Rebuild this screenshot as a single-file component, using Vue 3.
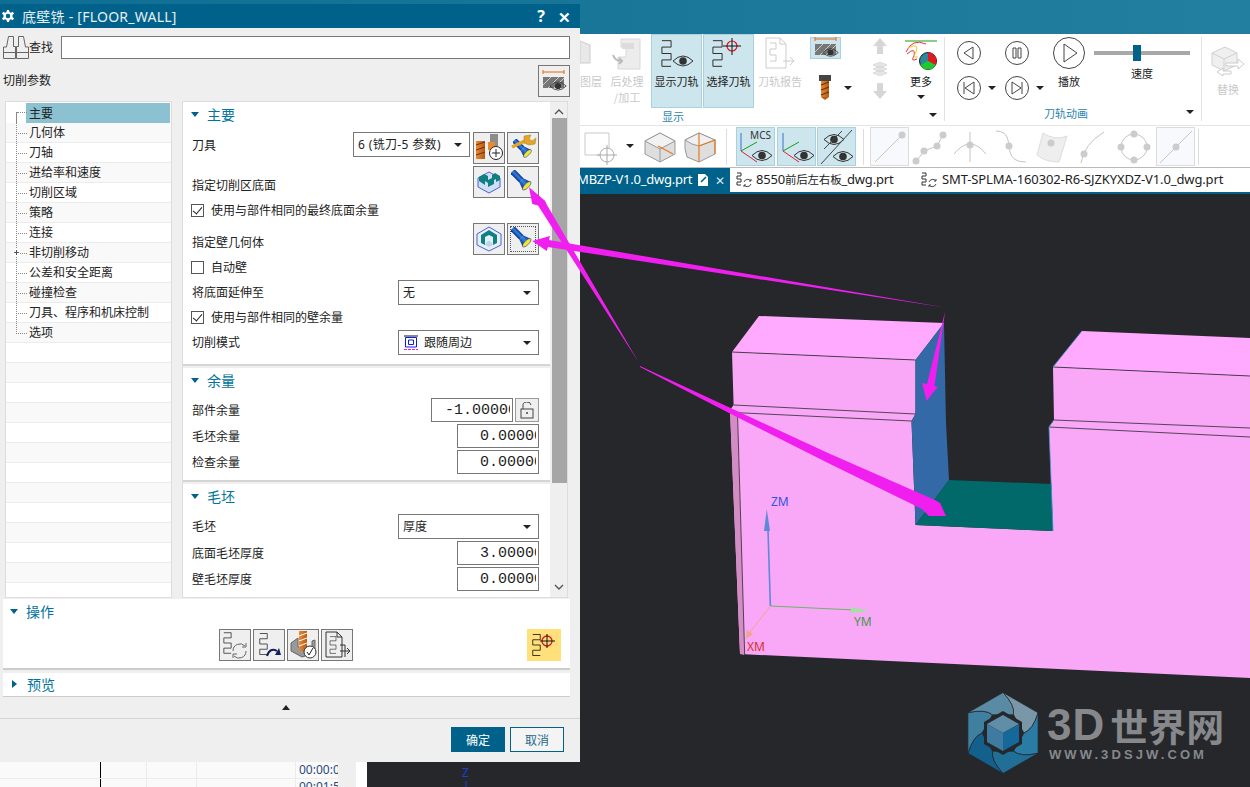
<script setup>
const treeItems = ['主要', '几何体', '刀轴', '进给率和速度', '切削区域', '策略', '连接', '非切削移动', '公差和安全距离', '碰撞检查', '刀具、程序和机床控制', '选项']
const emptyRows = 13
const tableRows = [['00:00:0'], ['00:01:5']]

// pinwheel blades of the watermark logo
const pt = (deg, rad) => {
  const a = (deg * Math.PI) / 180
  return `${(36 + rad * Math.cos(a)).toFixed(1)} ${(41 + rad * Math.sin(a)).toFixed(1)}`
}
const bladeColors = ['#7a97a8', '#2a7ca4', '#1f6f97', '#14608c', '#3f7fa0', '#5a8ba4']
const blades = bladeColors.map((fill, i) => {
  const a = -90 + 60 * i
  const b = a + 60
  const d = `M${pt(a, 40.5)} L${pt(b, 40.5)} Q${pt(b + 24, 30)} ${pt(b + 30, 21)} L${pt(a + 30, 21)} Q${pt(a + 24, 30)} ${pt(a, 40.5)} Z`
  return { fill, d }
})
</script>

<template>
  <div class="page">
    <svg class="defs" width="0" height="0">
      <defs>
        <linearGradient id="torch" x1="0" y1="0" x2="1" y2="0">
          <stop offset="0" stop-color="#0a2c8c" />
          <stop offset="0.55" stop-color="#2f86de" />
          <stop offset="1" stop-color="#0a2c8c" />
        </linearGradient>
        <linearGradient id="orange" x1="0" y1="0" x2="1" y2="0">
          <stop offset="0" stop-color="#e98a30" />
          <stop offset="1" stop-color="#b85a14" />
        </linearGradient>
        <symbol id="flashlight" viewBox="0 0 24 24">
          <g transform="rotate(-45 12 12)">
            <rect x="9" y="-3" width="6" height="13" fill="url(#torch)" />
            <path d="M9 10 L15 10 L17.5 17 L6.5 17 Z" fill="url(#torch)" />
            <ellipse cx="12" cy="17.3" rx="5.6" ry="2.2" fill="#f4e42a" stroke="#1b3fa8" stroke-width="0.6" />
          </g>
        </symbol>
        <symbol id="comb" viewBox="0 0 12 30">
          <path d="M1 1 H11 V8 H1 V15 H11 V22 H1 V29 H11" fill="none" stroke="currentColor" stroke-width="1" />
        </symbol>
        <symbol id="eye" viewBox="0 0 22 14">
          <path d="M1 7 Q11 -3 21 7 Q11 17 1 7 Z" fill="none" stroke="#333" stroke-width="1" />
          <circle cx="11" cy="7" r="3.8" fill="#333" />
        </symbol>
      </defs>
    </svg>

    <div class="titlebar-strip"></div>

    <!-- ribbon -->
    <div class="ribbon">
      <div class="group show-group">
        <div class="group-body">
          <div class="rb-btn faded w-layer">
            <svg width="22" height="33" viewBox="0 0 22 33"><path d="M0 4 L10 8 L10 26 L0 26 Z" fill="#e8e8e8" stroke="#ccc" /></svg>
            <span>图层</span>
          </div>
          <div class="rb-btn faded w-post">
            <svg width="30" height="33" viewBox="0 0 30 33">
              <path d="M9 2 H28 V32 H6 V20 H14 V10 H9 Z" fill="#ececec" stroke="#d8d8d8" />
              <path d="M10 6 H22 V12 H10 Z" fill="#dcdcdc" />
              <path d="M1 18 Q3 24 9 24 M7 21 L10 24 L7 27" fill="none" stroke="#bbb" stroke-width="2" />
            </svg>
            <span>后处理</span>
            <span>/加工</span>
          </div>
          <div class="rb-btn active w-big">
            <svg width="34" height="33" viewBox="0 0 34 33">
              <use href="#comb" x="1" y="1" width="11" height="31" class="ink" />
              <use href="#eye" x="12" y="17" width="22" height="14" />
            </svg>
            <span>显示刀轨</span>
          </div>
          <div class="rb-btn active w-big">
            <svg width="36" height="33" viewBox="0 0 36 33">
              <use href="#comb" x="1" y="1" width="11" height="31" class="ink" />
              <circle cx="21" cy="9" r="5" fill="none" stroke="#e0141c" stroke-width="1.2" />
              <path d="M12 9 H30 M21 1 V18" stroke="#111" stroke-width="1" />
            </svg>
            <span>选择刀轨</span>
          </div>
          <div class="rb-btn faded w-report">
            <svg width="34" height="33" viewBox="0 0 34 33">
              <path d="M3 1 H17 L23 7 V31 H3 Z M17 1 V7 H23" fill="none" stroke="#ccc" />
              <path d="M7 6 H13 V12 H7 V18 H13 V24 H7" fill="none" stroke="#ccc" />
              <path d="M20 24 H31 M27 20 L31 24 L27 28" fill="none" stroke="#ccc" />
            </svg>
            <span>刀轨报告</span>
          </div>
          <div class="rb-col">
            <div class="rb-small active">
              <svg width="26" height="22" viewBox="0 0 26 22">
                <path d="M2 2 H23 M2 0 V4 M23 0 V4" stroke="#e46a10" fill="none" />
                <rect x="2" y="7" width="21" height="11" fill="#777" />
                <path d="M2 15 L10 7 M7 18 L18 7 M13 18 L23 8" stroke="#ccc" />
                <use href="#eye" x="9" y="10" width="17" height="11" />
              </svg>
            </div>
            <div class="rb-tool">
              <svg width="14" height="25" viewBox="0 0 14 25">
                <rect x="1" y="0" width="12" height="6" fill="#444" />
                <rect x="3" y="6" width="8" height="16" fill="url(#orange)" />
                <path d="M3 10 L11 7 M3 15 L11 12 M3 20 L11 17" stroke="#6b3208" stroke-width="1.2" />
                <path d="M3 22 H11 L7 25 Z" fill="#b85a14" />
              </svg>
              <i class="caret"></i>
            </div>
          </div>
          <div class="rb-arrows">
            <svg width="16" height="18" viewBox="0 0 16 18"><path d="M8 1 L15 9 H11 V17 H5 V9 H1 Z" fill="#d6d6d6" /></svg>
            <svg width="16" height="14" viewBox="0 0 16 14"><path d="M1 3 L8 0 L15 3 L8 6 Z M1 7 L8 4 L15 7 L8 10 Z M1 11 L8 8 L15 11 L8 14 Z" fill="#e6e6e6" stroke="#ccc" stroke-width="0.6" /></svg>
            <svg width="16" height="16" viewBox="0 0 16 16"><path d="M5 0 H11 V8 H15 L8 16 L1 8 H5 Z" fill="#d6d6d6" /></svg>
          </div>
          <div class="rb-btn w-more">
            <svg width="34" height="33" viewBox="0 0 34 33">
              <path d="M1 4 H33" stroke="#10a010" stroke-width="1" />
              <path d="M2 15 Q8 1 22 7 M3 17 Q12 9 10 19 Q6 25 13 22" fill="none" stroke="#f03040" />
              <path d="M4 11 Q16 5 12 15 Q8 21 14 20" fill="none" stroke="#f0c820" />
              <circle cx="24" cy="24" r="8.5" fill="#2a8a9a" stroke="#222" />
              <path d="M24 24 V15.5 A8.5 8.5 0 0 1 31.5 28 Z" fill="#e01820" />
              <path d="M24 24 L31.5 28 A8.5 8.5 0 0 1 16.5 28 Z" fill="#20c830" />
            </svg>
            <span>更多</span>
            <i class="caret"></i>
          </div>
        </div>
        <div class="group-label">显示<i class="caret corner"></i></div>
      </div>

      <div class="group play-group">
        <div class="group-body play-body">
          <div class="play-grid">
            <svg class="cbtn" viewBox="0 0 24 24"><circle cx="12" cy="12" r="11.5" /><path d="M16 6 L7 12 L16 18 Z" /></svg>
            <svg class="cbtn" viewBox="0 0 24 24"><circle cx="12" cy="12" r="11.5" /><path d="M8 7 H11 V17 H8 Z M13 7 H16 V17 H13 Z" /></svg>
            <div class="cbtn-wrap">
              <svg class="cbtn" viewBox="0 0 24 24"><circle cx="12" cy="12" r="11.5" /><path d="M7 6 V18 M17 6 L8 12 L17 18 Z" /></svg>
              <i class="caret"></i>
            </div>
            <div class="cbtn-wrap">
              <svg class="cbtn" viewBox="0 0 24 24"><circle cx="12" cy="12" r="11.5" /><path d="M17 6 V18 M7 6 L16 12 L7 18 Z" /></svg>
              <i class="caret"></i>
            </div>
          </div>
          <div class="play-main">
            <svg class="cbtn big" viewBox="0 0 32 32"><circle cx="16" cy="16" r="15.5" /><path d="M11 7 L24 16 L11 25 Z" /></svg>
            <span>播放</span>
          </div>
          <div class="speed">
            <div class="slider"><b></b></div>
            <span>速度</span>
          </div>
        </div>
        <div class="group-label pl">刀轨动画<i class="caret corner"></i></div>
      </div>

      <div class="group replace">
        <div class="rb-btn faded">
          <svg width="34" height="33" viewBox="0 0 34 33">
            <path d="M1 8 L14 2 L26 8 L26 20 L13 26 L1 20 Z" fill="#efefef" stroke="#d0d0d0" />
            <path d="M1 8 L13 14 L26 8 M13 14 V26" fill="none" stroke="#d0d0d0" />
            <path d="M15 18 H27 V14 L33 19 L27 24 V21 H15 Z" fill="#fff" stroke="#ccc" />
            <path d="M20 26 H12 V23 L6 27 L12 31 V29 H20 Z" fill="#fff" stroke="#ccc" />
          </svg>
          <span>替换</span>
        </div>
      </div>
    </div>

    <!-- selection toolbar -->
    <div class="toolbar">
      <svg class="tb-first" width="42" height="36" viewBox="0 0 42 36">
        <path d="M2 4 H26 V26 H2 Z" fill="none" stroke="#c9c9c9" />
        <circle cx="24" cy="26" r="7" fill="#fff" stroke="#aaa" />
        <path d="M14 26 H34 M24 16 V36" stroke="#aaa" />
      </svg>
      <i class="caret tb-caret"></i>
      <svg class="cube" width="32" height="32" viewBox="0 0 32 32">
        <path d="M1 10 L16 2 L31 10 L31 23 L16 31 L1 23 Z" fill="#dedede" stroke="#999" />
        <path d="M1 10 L16 2 L31 10 L16 18 Z" fill="#f2f2f2" stroke="#999" />
        <path d="M16 18 V31" stroke="#999" />
        <path d="M14 15 L29 23" stroke="#e57b1f" stroke-width="1.4" />
      </svg>
      <svg class="cube2" width="32" height="32" viewBox="0 0 32 32">
        <path d="M1 9 L15 2 L31 9 L31 23 L15 31 L3 26 Q0 18 1 9 Z" fill="#dedede" stroke="#999" />
        <path d="M1 9 Q8 14 15 15 L31 9 L15 2 Z" fill="#f0f0f0" stroke="#999" />
        <path d="M15 2 V15 L31 9 V23 M15 15 V31" fill="none" stroke="#e57b1f" stroke-width="1.2" />
      </svg>
      <i class="sep first"></i>
      <div class="tb-btn active mcs">
        <svg width="37" height="36" viewBox="0 0 37 36">
          <path d="M4 4 V22" stroke="#3a70c8" fill="none" />
          <path d="M4 22 L20 13" stroke="#16a016" />
          <path d="M4 22 L20 33" stroke="#e0203a" />
          <use href="#eye" x="14" y="19" width="22" height="15" />
        </svg>
        <span>MCS</span>
      </div>
      <div class="tb-btn active">
        <svg width="36" height="36" viewBox="0 0 36 36">
          <path d="M4 4 V22" stroke="#3a70c8" />
          <path d="M4 22 L20 13" stroke="#16a016" />
          <path d="M4 22 L20 33" stroke="#e0203a" />
          <use href="#eye" x="14" y="19" width="22" height="15" />
        </svg>
      </div>
      <div class="tb-btn active">
        <svg width="37" height="36" viewBox="0 0 37 36">
          <use href="#eye" x="5" y="3" width="22" height="15" />
          <use href="#eye" x="14" y="20" width="22" height="15" />
          <path d="M3 35 L34 1" stroke="#444" />
          <path d="M6 20 L24 2" stroke="#444" />
        </svg>
      </div>
      <i class="sep"></i>
      <div class="tb-btn soft">
        <svg width="36" height="36" viewBox="0 0 36 36"><path d="M3 33 L30 6" stroke="#c4c4c4" /><circle cx="30" cy="6" r="3.5" fill="#ccc" /></svg>
      </div>
      <svg class="tb-item" width="38" height="38" viewBox="0 0 38 38"><path d="M6 34 L14 23 L27 18 L33 7" fill="none" stroke="#c4c4c4" /><circle cx="6" cy="33" r="3.5" fill="#ccc" /><circle cx="14" cy="23" r="3.5" fill="#ccc" /><circle cx="27" cy="18" r="3.5" fill="#ccc" /><circle cx="33" cy="7" r="3.5" fill="#ccc" /></svg>
      <svg class="tb-item" width="38" height="38" viewBox="0 0 38 38"><path d="M3 26 Q19 6 35 26 M19 4 V34" fill="none" stroke="#c4c4c4" /><circle cx="19" cy="17" r="3.5" fill="#ccc" /></svg>
      <svg class="tb-item" width="38" height="38" viewBox="0 0 38 38"><path d="M4 3 Q14 3 16 12 L18 24 Q20 34 34 34" fill="none" stroke="#c4c4c4" /><circle cx="17" cy="18" r="3.5" fill="#ccc" /></svg>
      <svg class="tb-item" width="38" height="38" viewBox="0 0 38 38"><path d="M10 5 Q22 13 34 8 L26 34 Q12 34 4 27 Z" fill="#eee" stroke="#ddd" /><circle cx="18" cy="15" r="3.5" fill="#ccc" /></svg>
      <svg class="tb-item" width="38" height="38" viewBox="0 0 38 38"><path d="M7 35 Q10 16 30 4" fill="none" stroke="#c4c4c4" /><circle cx="10" cy="26" r="3.5" fill="#ccc" /></svg>
      <svg class="tb-item" width="38" height="38" viewBox="0 0 38 38"><circle cx="19" cy="19" r="13" fill="none" stroke="#c4c4c4" /><circle cx="19" cy="6" r="3.5" fill="#ccc" /><circle cx="19" cy="32" r="3.5" fill="#ccc" /><circle cx="6" cy="19" r="3.5" fill="#ccc" /><circle cx="32" cy="19" r="3.5" fill="#ccc" /></svg>
      <div class="tb-btn soft sel">
        <svg width="36" height="36" viewBox="0 0 36 36"><path d="M2 34 L34 2" stroke="#c4c4c4" /><circle cx="18" cy="18" r="3.5" fill="#ccc" /></svg>
      </div>
      <i class="sep last"></i>
    </div>

    <!-- file tabs -->
    <div class="tabs">
      <div class="tab current">
        <span>MBZP-V1.0_dwg.prt</span>
        <svg width="12" height="12" viewBox="0 0 12 12"><path d="M1 0 H8 L11 3 V12 H1 Z" fill="#fff" /><path d="M4 8 L9 3" stroke="#00628b" stroke-width="1.6" /></svg>
        <em>✕</em>
      </div>
      <div class="tab second">
        <svg width="16" height="16" viewBox="0 0 16 16">
          <path d="M1 1 H5 V4 H1 V7 H5 V10 H1 V13 H5" fill="none" stroke="#333" />
          <path d="M8 10 A4 4 0 0 1 15 9 M15 12 A4 4 0 0 1 8 13 M15 7 V9 H13 M8 15 V13 H10" fill="none" stroke="#444" />
        </svg>
        <span>8550<small>前后左右板</small>_dwg.prt</span>
      </div>
      <div class="tab third">
        <svg width="16" height="16" viewBox="0 0 16 16">
          <path d="M1 1 H5 V4 H1 V7 H5 V10 H1 V13 H5" fill="none" stroke="#333" />
          <path d="M8 10 A4 4 0 0 1 15 9 M15 12 A4 4 0 0 1 8 13 M15 7 V9 H13 M8 15 V13 H10" fill="none" stroke="#444" />
        </svg>
        <span>SMT-SPLMA-160302-R6-SJZKYXDZ-V1.0_dwg.prt</span>
      </div>
    </div>

    <div class="work">
      <aside class="under">
        <div class="ops-table">
          <div v-for="row in tableRows" :key="row[0]" class="ops-row">
            <span class="c1"></span><span class="c2"></span><span class="c3"></span><span class="c4"></span><span class="c5">{{ row[0] }}</span>
          </div>
        </div>
        <div class="gutter"></div>
        <div class="gutter-white"></div>
      </aside>

      <!-- graphics window, drawn in page coordinates -->
      <svg class="model" viewBox="367 194 883 593" width="883" height="593">
        <path d="M732 352 L759 316 L944 323 L915.5 360 Z" fill="#ffaaff" />
        <path d="M1053 367 L1082 331 L1250 338 L1250 376 Z" fill="#ffaaff" />
        <path d="M732 352 L915.5 360 V414 L911.5 421 L915.5 525 L1053 531 L1049 427 L1054 420 L1053 367 L1250 376 V678 L740 654 L730 410 L733.6 405 Z" fill="#f9a8f8" />
        <path d="M730 410 L737.5 416 L744.7 655 L740 654 Z" fill="#d48cc4" />
        <path d="M944 323 L915.5 360 V414 L911.5 421 L915.5 525 L949 480 L946 423 Z" fill="#3269a6" />
        <path d="M949 480 L1051.5 484 L1053 531 L915.5 525 Z" fill="#01696a" />
        <g fill="none" stroke="#2b2b2f" stroke-width="0.8">
          <path d="M732 352 L915.5 360" />
          <path d="M733.6 405 L915.5 414" />
          <path d="M737.5 412.7 L911.5 421" />
          <path d="M737.5 413 L744.7 655" />
          <path d="M1053 367 L1250 376" />
          <path d="M1054 420 L1250 428" />
          <path d="M1049 427 L1250 437" />
        </g>
        <path d="M1053 367 L1082 331 M1054 420 L1049 427 L1053 531" fill="none" stroke="#4a9ad0" stroke-width="0.8" />
        <!-- triad -->
        <path d="M770.4 606 L768 530" stroke="#5c8ad8" stroke-width="1.6" />
        <path d="M766.8 509 L770 531 H764 Z" fill="#5c8ad8" />
        <path d="M770.4 606 L855 610" stroke="#6ab36a" stroke-width="1.2" />
        <path d="M870 611 L851 607 L851 613 Z" fill="#a4e0a4" />
        <path d="M770.4 606 L750 632" stroke="#f0a58a" stroke-width="1" />
        <path d="M746 639 L747 630 L753 634 Z" fill="#f0a58a" />
        <text x="771" y="506" class="axis" fill="#2f55e0">ZM</text>
        <text x="854" y="626" class="axis" fill="#3c9a4a">YM</text>
        <text x="747" y="651" class="axis" fill="#d8302c">XM</text>
        <text x="462" y="777" class="axis" fill="#1c3fd8">Z</text>
        <path d="M466 781 V787" stroke="#1c3fd8" />
      </svg>

      <div class="brand">
        <svg width="72" height="82" viewBox="0 0 72 82">
          <path v-for="b in blades" :key="b.fill" :d="b.d" :fill="b.fill" stroke="#25272b" stroke-width="0.7" />
          <path d="M36 19 L55 30 V52 L36 63 L17 52 V30 Z" fill="#25272b" />
          <path d="M36 23 L52 32 L36 41 L20 32 Z" fill="#5f8ea6" />
          <path d="M20 32 L36 41 V59 L20 50 Z" fill="#3f7ba0" />
          <path d="M52 32 L36 41 V59 L52 50 Z" fill="#14689a" />
        </svg>
        <div class="brand-text">
          <div class="brand-name"><b>3D</b>世界网</div>
          <div class="brand-url">WWW.3DSJW.COM</div>
        </div>
      </div>
    </div>

    <!-- floating dialog -->
    <div class="dialog">
      <div class="dlg-title">
        <svg width="12" height="12" viewBox="0 0 24 24"><path d="M10 0 H14 L15 4 L18 5.5 L21.5 3.5 L24 7 L21 10 V14 L24 17 L21.5 20.5 L18 18.5 L15 20 L14 24 H10 L9 20 L6 18.5 L2.5 20.5 L0 17 L3 14 V10 L0 7 L2.5 3.5 L6 5.5 L9 4 Z M12 7.5 A4.5 4.5 0 1 0 12 16.5 A4.5 4.5 0 1 0 12 7.5 Z" fill="#fff" fill-rule="evenodd" /></svg>
        <span class="dlg-name">底壁铣 - [FLOOR_WALL]</span>
        <b class="dlg-help">?</b>
        <b class="dlg-close">✕</b>
      </div>

      <div class="find">
        <svg width="26" height="24" viewBox="0 0 26 24">
          <path d="M5.5 .5 H10.5 V10.5 H12.5 V22.5 H.5 V11 H3.5 Z M15.5 .5 H20.5 L22.5 11 H25.5 V22.5 H13.5 V10.5 H15.5 Z M.5 16.5 H12.5 M13.5 16.5 H25.5" fill="none" stroke="#666" />
        </svg>
        <span>查找</span>
        <div class="find-input"></div>
      </div>

      <div class="crumb">
        <span>切削参数</span>
        <div class="crumb-btn">
          <svg width="26" height="24" viewBox="0 0 26 24">
            <path d="M2 3 H23 M2 1 V5 M23 1 V5" stroke="#e46a10" fill="none" />
            <rect x="2" y="8" width="21" height="11" fill="#777" />
            <path d="M2 16 L10 8 M7 19 L18 8 M13 19 L23 9" stroke="#ccc" />
            <use href="#eye" x="8" y="11" width="18" height="12" />
          </svg>
        </div>
      </div>

      <div class="split">
        <div class="tree">
          <div v-for="(item, i) in treeItems" :key="item" class="tree-row" :class="{ selected: i === 0 }">
            <i v-if="item === '非切削移动'" class="plus"></i>
            <i class="dots"></i>
            <span>{{ item }}</span>
          </div>
          <div v-for="n in emptyRows" :key="n" class="tree-row blank"></div>
        </div>

        <div class="params">
          <div class="params-inner">
            <section class="sec sec-main">
              <header class="sec-head"><i class="tri"></i>主要</header>
              <div class="row h32">
                <label class="up">刀具</label>
                <div class="ctrl">
                  <div class="select w116"><span class="num">6 (铣刀-5 参数)</span><i class="caret"></i></div>
                  <div class="ibtn">
                    <svg width="28" height="28" viewBox="0 0 28 28">
                      <rect x="1" y="7" width="9" height="18" fill="url(#orange)" />
                      <path d="M1 11 L10 8 M1 16 L10 13 M1 21 L10 18" stroke="#6b3208" />
                      <rect x="15" y="0" width="8" height="12" fill="#8d8d8d" />
                      <rect x="13" y="8" width="7" height="8" fill="#e98a30" />
                      <circle cx="21" cy="19" r="6.5" fill="#fff" stroke="#222" />
                      <path d="M17 19 H25 M21 15 V23" stroke="#222" />
                    </svg>
                  </div>
                  <div class="ibtn">
                    <svg width="28" height="28" viewBox="0 0 28 28">
                      <use href="#flashlight" x="4" y="5" width="22" height="22" />
                      <path d="M3 13 L18 6" stroke="#e2a62c" stroke-width="3.4" />
                      <path d="M15 2 L22 1 L20 5 L23 7 L27 4 L26 10 L20 11 L15 9 Z" fill="#e2a62c" stroke="#a87810" stroke-width="0.5" />
                    </svg>
                  </div>
                </div>
              </div>
              <div class="row h32 gap2">
                <label class="down">指定切削区底面</label>
                <div class="ctrl">
                  <div class="ibtn">
                    <svg width="26" height="26" viewBox="0 0 26 26">
                      <path d="M2 9 L13 3 L24 9 V18 L13 24 L2 18 Z" fill="#cfe0f5" stroke="#4d5fe0" />
                      <path d="M3 8 L8 5 L12 7 L12 11 L16 9 L16 6 L19 4 L24 7 V11 L20 13 V10 L18 11 V15 L12 18 V14 L9 12 V16 L3 12 Z" fill="#0f7f82" />
                    </svg>
                  </div>
                  <div class="ibtn"><svg width="24" height="24"><use href="#flashlight" width="24" height="24" /></svg></div>
                </div>
              </div>
              <div class="row h25"><span class="check on"></span><label>使用与部件相同的最终底面余量</label></div>
              <div class="row h32">
                <label class="down">指定壁几何体</label>
                <div class="ctrl">
                  <div class="ibtn">
                    <svg width="26" height="26" viewBox="0 0 26 26">
                      <path d="M13 1 L25 8 V19 L13 25 L1 19 V8 Z" fill="#e6effa" stroke="#4d5fe0" />
                      <path d="M5 9 L13 4 L21 9 V17 L17 19 V11 L13 9 L9 11 V19 L5 17 Z" fill="#0f7f82" />
                      <path d="M9 19 Q13 11 17 19 L13 21 Z" fill="#b8d8e8" />
                    </svg>
                  </div>
                  <div class="ibtn focus"><svg width="24" height="24"><use href="#flashlight" width="24" height="24" /></svg></div>
                </div>
              </div>
              <div class="row h25"><span class="check"></span><label>自动壁</label></div>
              <div class="row h25">
                <label>将底面延伸至</label>
                <div class="select w141"><span>无</span><i class="caret"></i></div>
              </div>
              <div class="row h25"><span class="check on"></span><label>使用与部件相同的壁余量</label></div>
              <div class="row h25">
                <label>切削模式</label>
                <div class="select w141">
                  <svg width="16" height="15" viewBox="0 0 16 15">
                    <rect x="1" y="0" width="14" height="2" fill="#888" />
                    <path d="M2.5 2.5 H13.5 V12 H2.5 Z M5.5 5 H10.5 V9.5 H5.5 Z" fill="none" stroke="#0a1ee0" />
                    <path d="M1 14.5 H15" stroke="#e818e8" stroke-dasharray="3 1" />
                  </svg>
                  <span>跟随周边</span><i class="caret"></i>
                </div>
              </div>
            </section>

            <section class="sec sec-stock">
              <header class="sec-head"><i class="tri"></i>余量</header>
              <div class="row h24">
                <label>部件余量</label>
                <div class="ctrl">
                  <div class="num-input w82"><span>-1.00000</span></div>
                  <div class="lock">
                    <svg width="14" height="17" viewBox="0 0 14 17"><rect x="1" y="7" width="12" height="9" fill="none" stroke="#444" /><path d="M3 7 V4 A4 3.5 0 0 1 11 3" fill="none" stroke="#444" /><circle cx="7" cy="11" r="1" fill="#444" /></svg>
                  </div>
                </div>
              </div>
              <div class="row h24 gap2"><label>毛坯余量</label><div class="num-input"><span>0.00000</span></div></div>
              <div class="row h24 gap2"><label>检查余量</label><div class="num-input"><span>0.00000</span></div></div>
            </section>

            <section class="sec sec-blank">
              <header class="sec-head"><i class="tri"></i>毛坯</header>
              <div class="row h25">
                <label>毛坯</label>
                <div class="select w141"><span>厚度</span><i class="caret"></i></div>
              </div>
              <div class="row h24 gap2"><label>底面毛坯厚度</label><div class="num-input"><span>3.00000</span></div></div>
              <div class="row h24 gap2"><label>壁毛坯厚度</label><div class="num-input"><span>0.00000</span></div></div>
            </section>
          </div>

          <div class="scroll">
            <svg width="10" height="6" viewBox="0 0 10 6"><path d="M1 5 L5 1 L9 5" fill="none" stroke="#555" stroke-width="1.4" /></svg>
            <div class="thumb"></div>
            <svg class="scroll-down" width="10" height="6" viewBox="0 0 10 6"><path d="M1 1 L5 5 L9 1" fill="none" stroke="#555" stroke-width="1.4" /></svg>
          </div>
        </div>
      </div>

      <section class="ops">
        <header class="sec-head"><i class="tri"></i>操作</header>
        <div class="ops-buttons">
          <div class="ibtn">
            <svg width="28" height="28" viewBox="0 0 28 28" class="ink">
              <use href="#comb" x="2" y="1" width="9" height="22" />
              <path d="M12 20 A7 7 0 0 1 24 15 M25 20 A7 7 0 0 1 13 25 M25 12 V16 H21 M12 27 V23 H16" fill="none" stroke="#666" />
            </svg>
          </div>
          <div class="ibtn">
            <svg width="28" height="28" viewBox="0 0 28 28" class="ink">
              <use href="#comb" x="4" y="1" width="9" height="24" />
              <path d="M12 25 Q15 16 22 20" fill="none" stroke="#14205c" stroke-width="2" />
              <path d="M20 24 L26 24 L24 17 Z" fill="#14205c" />
            </svg>
          </div>
          <div class="ibtn">
            <svg width="30" height="28" viewBox="0 0 30 28">
              <path d="M3 12 L10 7 V16 L24 16 V10 L27 9 V22 L14 26 L3 20 Z" fill="#999" stroke="#666" />
              <rect x="11" y="0" width="8" height="20" fill="url(#orange)" />
              <path d="M11 5 L19 2 M11 10 L19 7 M11 15 L19 12" stroke="#fff" />
              <circle cx="22" cy="21" r="6" fill="#fff" stroke="#333" />
              <path d="M19 21 L21 24 L25 17" fill="none" stroke="#222" />
            </svg>
          </div>
          <div class="ibtn">
            <svg width="28" height="28" viewBox="0 0 28 28" class="ink">
              <path d="M3 1 H14 L19 6 V26 H3 Z M14 1 V6 H19" fill="none" stroke="#333" />
              <use href="#comb" x="6" y="5" width="8" height="18" />
              <path d="M17 14 H22 V26 M17 20 H27 M24 17 L27 20 L24 23" fill="none" stroke="#333" />
            </svg>
          </div>
          <div class="ibtn-yellow">
            <svg width="28" height="26" viewBox="0 0 28 26" class="black">
              <use href="#comb" x="2" y="1" width="9" height="24" />
              <circle cx="17" cy="9" r="5" fill="none" stroke="#e0141c" stroke-width="1.3" />
              <path d="M10 9 H25 M17 2 V16" stroke="#111" />
            </svg>
          </div>
        </div>
      </section>

      <section class="preview">
        <header class="sec-head"><i class="tri closed"></i>预览</header>
      </section>

      <div class="collapse"><i></i></div>

      <footer class="dlg-foot">
        <button class="ok">确定</button>
        <button class="cancel">取消</button>
      </footer>
    </div>

    <!-- leader arrows pasted on top of everything -->
    <svg class="marks" viewBox="0 0 1250 787" width="1250" height="787">
      <g fill="#f01ff0">
        <path d="M945 307.5 L549 240 L550 236 L532.3 241 L546.7 251 L548 247 Z" />
        <path d="M638.5 362 L547 205 L545 200.7 L529 187.3 L532.3 204 L538 205.5 Z" />
        <path d="M640 366 L828 453 L935 500 L940 503 L946 516 L929 516 L922 509 L828 463 L729 413 L640 367 Z" />
        <path d="M945 312 L934.5 386 L937.6 387 L926.6 401 L922 383 L927 384 Z" />
      </g>
    </svg>
  </div>
</template>

<style>
html, body { margin: 0; background: #25272b; }
</style>

<style scoped>
.page {
  position: relative;
  width: 1250px;
  height: 787px;
  overflow: hidden;
  display: flex;
  flex-direction: column;
  font-family: "Noto Sans CJK SC", "Noto Sans", sans-serif;
  font-size: 12px;
  color: #222;
  background: #fff;
}
.defs { position: absolute; }
.ink { color: #222; }
.black { color: #000; }

.titlebar-strip { height: 34px; flex: none; background: linear-gradient(90deg, #0f6e94, #237f9f); }

.ribbon { height: 91px; flex: none; display: flex; background: #fff; font-size: 11px; }
.group { display: flex; flex-direction: column; position: relative; flex: none; }
.group-body { height: 74px; display: flex; align-items: flex-start; }
.group-label {
  height: 16px;
  line-height: 16px;
  text-align: center;
  color: #2b86ae;
  position: relative;
}
.group-label.pl { padding-right: 14px; }
.corner { position: absolute; right: 1px; top: 5px; }
.pl .corner { right: 7px; }
.show-group { width: 530px; margin-left: 408px; }
.show-group .group-body { padding-left: 172px; }
.play-group { width: 256px; margin-left: 6px; border-left: 1px solid #e2e2e2; border-right: 1px solid #e2e2e2; margin-top: 3px; height: 84px; }
.replace { flex: 1; padding: 8px 0 0 9px; }
.replace .rb-btn { width: 34px; }

.caret {
  display: inline-block;
  width: 0;
  height: 0;
  border: 4px solid transparent;
  border-top: 4px solid #222;
  border-bottom: 0;
}
.rb-btn { display: flex; flex-direction: column; align-items: center; line-height: 16px; flex: none; white-space: nowrap; }
.rb-btn svg { margin-top: 3px; margin-bottom: 3px; }
.faded { color: #c9c9c9; }
.w-layer { width: 22px; align-items: flex-end; margin-right: 4px; }
.w-post { width: 42px; margin-right: 3px; }
.w-big { width: 51px; height: 74px; box-sizing: border-box; }
.w-big svg { margin-top: 2px; }
.w-report { width: 50px; margin-left: 1px; }
.w-more { width: 40px; margin-right: -3px; }
.w-more .caret { margin-top: 6px; }
.active { background: #cde5ec; border: 1px solid #a9d2de; }
.w-big + .w-big { margin-left: 1px; }
.rb-col { width: 58px; flex: none; padding-left: 5px; display: flex; flex-direction: column; box-sizing: border-box; }
.rb-small { width: 31px; height: 22px; box-sizing: border-box; margin-top: 3px; display: flex; align-items: center; justify-content: center; }
.rb-tool { display: flex; align-items: center; gap: 12px; padding-left: 8px; margin-top: 16px; }
.rb-arrows { width: 34px; flex: none; display: flex; flex-direction: column; align-items: center; gap: 7px; padding-top: 3px; margin-right: 4px; }

.play-body { padding: 0 0 0 12px; height: 71px; }
.play-grid { display: grid; grid-template-columns: 48px 48px; row-gap: 11px; width: 96px; padding-top: 4px; }
.cbtn { width: 24px; height: 24px; fill: none; stroke: #444; stroke-width: 1; display: block; }
.cbtn.big { width: 32px; height: 32px; }
.cbtn-wrap { display: flex; align-items: center; gap: 7px; }
.play-main { display: flex; flex-direction: column; align-items: center; width: 32px; gap: 4px; line-height: 16px; }
.play-main span { white-space: nowrap; }
.speed { margin-left: 9px; width: 96px; display: flex; flex-direction: column; align-items: center; }
.slider { width: 96px; height: 4px; background: #a8a8a8; margin-top: 14px; position: relative; }
.slider b { position: absolute; left: 39px; top: -6px; width: 8px; height: 16px; background: #00628b; }
.speed span { margin-top: 10px; line-height: 16px; }

.toolbar {
  height: 41px;
  flex: none;
  display: flex;
  align-items: center;
  padding-left: 583px;
  background: #fff;
  border-top: 1px solid #e4e4e4;
}
.tb-first, .cube, .cube2, .tb-item { flex: none; }
.tb-caret { margin: 0 0 2px 1px; }
.cube { margin-left: 10px; }
.cube2 { margin-left: 8px; }
.sep { width: 1px; height: 36px; background: #ddd; margin: 0 6px; flex: none; }
.sep.first { margin: 0 9px 0 10px; }
.sep.last { margin-left: 3px; }
.tb-btn { width: 39px; height: 39px; box-sizing: border-box; position: relative; display: flex; align-items: center; justify-content: center; flex: none; margin-right: 1px; }
.mcs { margin-right: 2px; }
.soft { border: 1px solid #dcdcdc; background: #f8f9fd; }
.tb-item + .tb-item { margin-left: 3px; }
.sel { margin-left: 3px; margin-right: 0; }
.mcs span { position: absolute; top: 1px; right: 3px; font-size: 10px; line-height: 13px; font-family: "Noto Sans", sans-serif; color: #333; }

.tabs { height: 24px; flex: none; display: flex; align-items: center; background: #fff; border-top: 1px solid #bbb; font-family: "Noto Sans", "Noto Sans CJK SC", sans-serif; font-size: 13px; letter-spacing: -0.12px; }
.tabs span { position: relative; top: -1px; }
.tabs small { font-size: 11.5px; }
.tab { display: flex; align-items: center; height: 100%; white-space: nowrap; flex: none; box-sizing: border-box; }
.current { width: 730px; justify-content: flex-end; gap: 5px; padding-right: 5px; background: #00628b; color: #fff; letter-spacing: -0.25px; }
.current em { font-style: normal; font-size: 12px; margin-left: 1px; color: #d8e6ec; }
.second { width: 185px; padding-left: 6px; gap: 4px; letter-spacing: -0.2px; }
.third { padding-left: 6px; gap: 5px; }

.work { flex: 1; min-height: 0; display: flex; position: relative; background: #25272b; border-top: 2px solid #00628b; }
.under { width: 367px; flex: none; display: flex; align-items: flex-end; background: #fff; }
.ops-table { width: 338px; flex: none; height: 25px; }
.ops-row { display: flex; height: 16px; background: #fafafa; border-bottom: 1px solid #ececec; font-family: "Noto Sans", sans-serif; color: #2a4a7a; font-size: 12px; line-height: 16px; }
.ops-row span { border-right: 1px solid #ececec; flex: none; box-sizing: border-box; }
.c1 { width: 101px; border-right: 1px solid #000 !important; }
.c2 { width: 46px; }
.c3 { width: 50px; }
.c4 { width: 99px; }
.c5 { flex: 1 !important; padding-left: 3px; border: 0 !important; overflow: hidden; white-space: nowrap; }
.gutter { width: 18px; height: 100%; background: #efefef; }
.gutter-white { flex: 1; height: 100%; background: #fff; }
.model { flex: none; display: block; }
.axis { font-family: "Noto Sans", sans-serif; font-size: 12px; }

.brand { position: absolute; left: 967px; top: 498px; display: flex; gap: 8px; }
.brand-text { margin-top: 13px; color: #86888b; }
.brand-name { font-size: 38px; line-height: 40px; height: 40px; font-weight: 700; white-space: nowrap; display: flex; align-items: center; gap: 5px; }
.brand-name b { font-family: "Liberation Sans", sans-serif; font-size: 44px; letter-spacing: 1px; }
.brand-url { font-family: "Liberation Sans", sans-serif; font-size: 13px; line-height: 14px; font-weight: 700; letter-spacing: 3.1px; margin-top: 3px; margin-left: 2px; white-space: nowrap; }

.dialog {
  position: absolute;
  left: 0;
  top: 4px;
  width: 580px;
  height: 758px;
  background: #efefef;
  display: flex;
  flex-direction: column;
}
.dlg-title { height: 24px; flex: none; background: #00628b; color: #fff; display: flex; align-items: center; padding: 0 9px 0 2px; }
.dlg-name { margin-left: 8px; font-size: 14px; letter-spacing: 0.25px; font-family: "Noto Sans", "Noto Sans CJK SC", sans-serif; flex: 1; color: #e6f0f4; }
.dlg-help { font-family: "Noto Sans", sans-serif; font-size: 16px; margin-right: 13px; }
.dlg-close { font-size: 15px; font-weight: 700; }

.find { height: 23px; flex: none; margin-top: 8px; display: flex; align-items: center; padding: 0 10px 0 3px; }
.find span { margin: -2px 8px 0 0; white-space: nowrap; }
.find-input { flex: 1; height: 23px; background: #fff; border: 1px solid #777; box-sizing: border-box; }

.crumb { height: 32px; flex: none; margin-top: 6px; display: flex; align-items: center; justify-content: space-between; padding: 0 10px 0 3px; }
.crumb span { margin-top: -4px; }
.crumb-btn { width: 32px; height: 32px; border: 1px solid #777; box-sizing: border-box; background: #efefef; display: flex; align-items: center; justify-content: center; }

.split { flex: none; height: 497px; margin-top: 4px; display: flex; padding-left: 5px; }
.tree { width: 167px; box-sizing: border-box; height: 497px; background: #fff; border: 1px solid #ddd; overflow: hidden; padding-top: 1px; flex: none; }
.tree-row { height: 20px; box-sizing: border-box; border-bottom: 1px solid #ececec; position: relative; display: flex; align-items: center; padding-left: 20px; background: #fff; white-space: nowrap; }
.tree-row:nth-child(even) { background: #f9f9f9; }
.tree-row.selected { background: #8bc1d1; margin-left: 20px; padding-left: 3px; margin-right: 1px; border-bottom: 0; }
.tree-row span { position: relative; margin-left: 3px; top: -1px; }
.tree-row.selected span { margin-left: 0; }
.dots { position: absolute; left: 10px; top: -10px; height: 20px; width: 10px; border-left: 1px dotted #888; border-bottom: 1px dotted #888; box-sizing: content-box; }
.tree-row.selected .dots { left: -10px; top: 9px; height: 11px; border-bottom: 0; }
.tree-row.selected .dots::before { content: ""; position: absolute; left: 0; top: 0; width: 10px; border-top: 1px dotted #888; }
.plus { position: absolute; left: 7px; top: 6px; width: 7px; height: 7px; z-index: 1; background:
  linear-gradient(#555, #555) center / 5px 1px no-repeat,
  linear-gradient(#555, #555) center / 1px 5px no-repeat, #fff; }
.blank .dots { display: none; }

.params { margin-left: 10px; width: 386px; height: 497px; box-sizing: border-box; border: 1px solid #ddd; background: #efefef; display: flex; flex: none; }
.params-inner { width: 367px; flex: none; }
.sec { background: #fff; padding: 0 11px 0 9px; box-sizing: border-box; border-bottom: 2px solid #d5d5d5; margin-bottom: 2px; }
.sec-main { height: 264px; }
.sec-stock { height: 114px; }
.sec-blank { height: 113px; border-bottom: 0; margin-bottom: 0; }
.sec-head { height: 30px; box-sizing: border-box; padding-bottom: 6px; display: flex; align-items: center; color: #00749c; font-size: 14px; gap: 8px; }
.tri { width: 0; height: 0; border: 4.5px solid transparent; border-top: 5px solid #00628b; border-bottom: 0; flex: none; margin-left: -1px; }
.ops .tri { margin-left: 0; }
.tri.closed { border: 4.5px solid transparent; border-left: 5px solid #00628b; border-right: 0; margin-left: 2px; margin-right: 2px; }
.row { display: flex; align-items: center; justify-content: space-between; box-sizing: border-box; white-space: nowrap; }
.row label { position: relative; top: -1px; }
.row .check + label { margin-left: 7px; margin-right: auto; }
.h32 { height: 32px; }
.h25 { height: 25px; }
.h24 { height: 24px; }
.gap2 { margin-top: 2px; }
.up { margin-top: -6px; }
.down { margin-top: 6px; }
.ctrl { display: flex; gap: 2px; align-items: flex-start; }
.select { height: 25px; box-sizing: border-box; border: 1px solid #777; background: #fff; display: flex; align-items: center; gap: 5px; padding: 0 7px 0 4px; }
.select .caret { margin-left: auto; }
.select span { position: relative; top: -1px; }
.w116 { width: 117px; margin-right: 1px; }
.w141 { width: 141px; }
.num { font-family: "Noto Sans", "Noto Sans CJK SC", sans-serif; white-space: nowrap; letter-spacing: 0.35px; }
.ibtn { width: 32px; height: 32px; box-sizing: border-box; border: 1px solid #777; background: #efefef; display: flex; align-items: center; justify-content: center; flex: none; }
.ibtn.focus { outline: 1px dotted #555; outline-offset: -4px; }
.check { width: 13px; height: 13px; box-sizing: border-box; border: 1px solid #555; background: #fff; position: relative; flex: none; margin-left: -1px; }
.check.on::after { content: ""; position: absolute; left: 3px; top: 0; width: 4px; height: 8px; border: solid #222; border-width: 0 1.5px 1.5px 0; transform: rotate(40deg); }
.num-input { width: 82px; height: 24px; box-sizing: border-box; border: 1px solid #777; background: #fff; display: flex; justify-content: flex-end; align-items: center; padding-right: 2px; }
.num-input span { display: block; width: 56px; overflow: hidden; white-space: nowrap; font-family: "Liberation Mono", monospace; font-size: 15px; flex: none; }
.num-input.w82 span { width: 65px; }
.lock { width: 24px; height: 24px; box-sizing: border-box; border: 1px solid #999; background: #efefef; display: flex; align-items: center; justify-content: center; }

.scroll { width: 18px; flex: none; display: flex; flex-direction: column; align-items: center; padding-top: 7px; position: relative; }
.thumb { width: 15px; height: 365px; background: #a6a6a6; margin-top: 3px; }
.scroll-down { position: absolute; bottom: 7px; left: 4px; }

.ops { margin: 1px 10px 0 3px; height: 71px; background: #fff; border-bottom: 2px solid #ccc; box-sizing: border-box; padding-left: 7px; flex: none; }
.ops .sec-head { height: 27px; padding-bottom: 3px; margin-bottom: 3px; }
.ops-buttons { display: flex; gap: 2px; padding-left: 209px; }
.ibtn-yellow { width: 34px; height: 32px; background: #ffe07a; margin-left: 172px; display: flex; align-items: center; justify-content: center; }

.preview { margin: 3px 10px 0 3px; height: 24px; background: #fff; border-bottom: 1px solid #ccc; box-sizing: border-box; padding-left: 7px; flex: none; }
.preview .sec-head { height: 23px; padding-bottom: 1px; }
.collapse { height: 21px; flex: none; display: flex; align-items: center; justify-content: center; padding-right: 8px; border-bottom: 1px solid #d4d4d4; }
.collapse i { width: 0; height: 0; border: 4.5px solid transparent; border-bottom: 5px solid #222; border-top: 0; display: block; }

.dlg-foot { flex: 1; display: flex; justify-content: flex-end; align-items: flex-start; gap: 5px; padding: 8px 16px 0 0; }
.dlg-foot button { width: 54px; height: 25px; font: inherit; padding: 0; }
.ok { background: #00628b; border: 1px solid #00628b; color: #fff; }
.cancel { background: #f4f4f4; border: 1px solid #00628b; color: #1d6a8c; }

.marks { position: absolute; left: 0; top: 0; pointer-events: none; }
</style>
